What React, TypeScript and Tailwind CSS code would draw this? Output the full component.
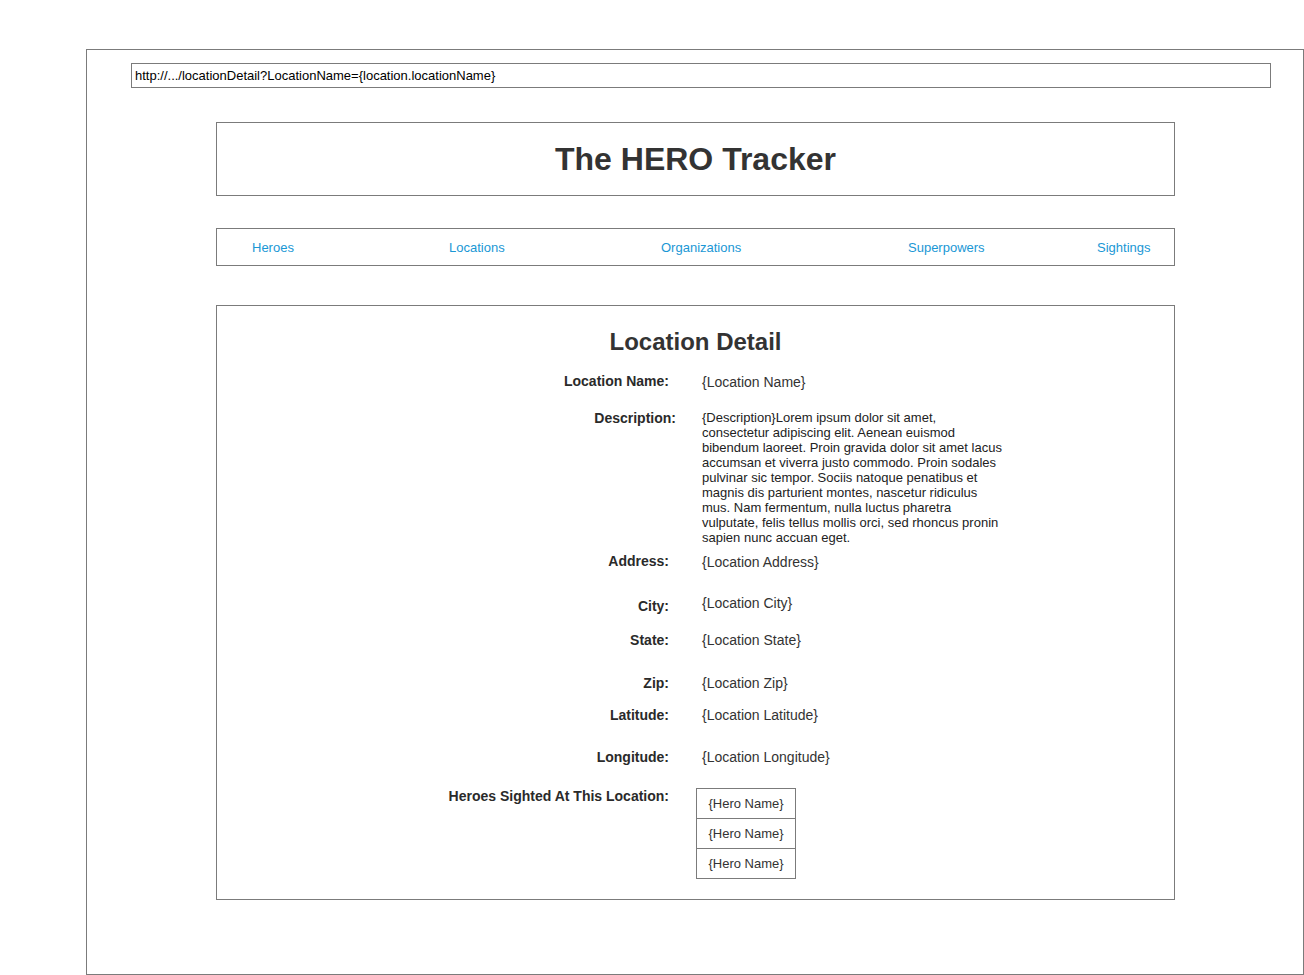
import React from "react";

const navLinks = [
  { label: "Heroes", w: "w-[197px]" },
  { label: "Locations", w: "w-[212px]" },
  { label: "Organizations", w: "w-[247px]" },
  { label: "Superpowers", w: "w-[189px]" },
  { label: "Sightings", w: "" },
];

const descLines = [
  "{Description}Lorem ipsum dolor sit amet,",
  "consectetur adipiscing elit. Aenean euismod",
  "bibendum laoreet. Proin gravida dolor sit amet lacus",
  "accumsan et viverra justo commodo. Proin sodales",
  "pulvinar sic tempor. Sociis natoque penatibus et",
  "magnis dis parturient montes, nascetur ridiculus",
  "mus. Nam fermentum, nulla luctus pharetra",
  "vulputate, felis tellus mollis orci, sed rhoncus pronin",
  "sapien nunc accuan eget.",
];

function Row({
  label,
  value,
  h,
  labelClass = "",
}: {
  label: string;
  value: React.ReactNode;
  h: string;
  labelClass?: string;
}) {
  return (
    <div className={`flex items-start ${h}`}>
      <div className={`w-[452px] shrink-0 text-right text-[14px] leading-[16px] font-bold text-[#2a2a2a] ${labelClass}`}>
        {label}
      </div>
      <div className="ml-[33px] text-[14px] leading-[16px] text-[#333]">{value}</div>
    </div>
  );
}

export default function App() {
  return (
    <div
      className="w-[1304px] h-[975px] bg-white pt-[49px] pl-[86px] overflow-hidden"
      style={{ fontFamily: '"Liberation Sans", Arial, sans-serif' }}
    >
      <div className="w-[1218px] h-[926px] border border-[#7b7b7b]">
        {/* url bar */}
        <div className="ml-[44px] mt-[13px] w-[1140px] h-[25px] border border-[#7b7b7b] pl-[3px] text-[13px] leading-[24px] text-black">
          http://.../locationDetail?LocationName={"{location.locationName}"}
        </div>

        {/* header */}
        <div className="ml-[129px] mt-[34px] w-[959px] h-[74px] border border-[#7b7b7b] pt-[20px] text-center">
          <h1 className="text-[32px] leading-[32px] font-bold text-[#333]">The HERO Tracker</h1>
        </div>

        {/* nav */}
        <div className="ml-[129px] mt-[32px] w-[959px] h-[38px] border border-[#7b7b7b] flex pl-[35px] pt-[1px] text-[13px] leading-[36px] text-[#1a97d5]">
          {navLinks.map((l) => (
            <a key={l.label} className={`${l.w} shrink-0 cursor-pointer`}>
              {l.label}
            </a>
          ))}
        </div>

        {/* detail */}
        <div className="ml-[129px] mt-[39px] w-[959px] h-[595px] border border-[#7b7b7b] pt-[22px]">
          <h2 className="text-center text-[24px] leading-[28px] font-bold text-[#333]">Location Detail</h2>
          <div className="mt-[18px]">
            <Row label="Location Name:" value="{Location Name}" h="h-[36px]" labelClass="-mt-[1px]" />
            <div className="flex items-start h-[144px]">
              <div className="w-[459px] shrink-0 text-right text-[14px] leading-[16px] font-bold text-[#2a2a2a]">
                Description:
              </div>
              <div className="ml-[26px] text-[13px] leading-[15px] text-[#222] whitespace-nowrap">
                {descLines.map((t) => (
                  <div key={t}>{t}</div>
                ))}
              </div>
            </div>
            <Row label="Address:" value="{Location Address}" h="h-[41px]" labelClass="-mt-[1px]" />
            <Row label="City:" value="{Location City}" h="h-[37px]" labelClass="pt-[3px]" />
            <Row label="State:" value="{Location State}" h="h-[43px]" />
            <Row label="Zip:" value="{Location Zip}" h="h-[32px]" />
            <Row label="Latitude:" value="{Location Latitude}" h="h-[42px]" />
            <Row label="Longitude:" value="{Location Longitude}" h="h-[39px]" />
            <div className="flex items-start">
              <div className="w-[452px] shrink-0 text-right text-[14px] leading-[16px] font-bold text-[#2a2a2a]">
                Heroes Sighted At This Location:
              </div>
              <div className="ml-[27px] w-[100px] border border-[#7b7b7b] text-center text-[13px] leading-[29px] text-[#333]">
                <div>{"{Hero Name}"}</div>
                <div className="border-t border-[#7b7b7b]">{"{Hero Name}"}</div>
                <div className="border-t border-[#7b7b7b]">{"{Hero Name}"}</div>
              </div>
            </div>
          </div>
        </div>
      </div>
    </div>
  );
}
